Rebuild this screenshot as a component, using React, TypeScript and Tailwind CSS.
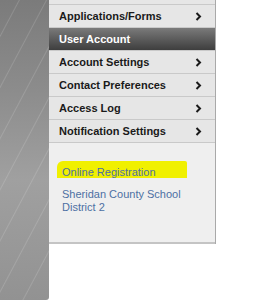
const rows = [
  { label: "Account Settings" },
  { label: "Contact Preferences" },
  { label: "Access Log" },
  { label: "Notification Settings" },
];

function Chevron() {
  return (
    <svg width="7" height="9" viewBox="0 0 7 9" className="mr-[2px]">
      <polyline points="1.5,1 5,4.5 1.5,8" fill="none" stroke="#1a1a1a" strokeWidth="2" />
    </svg>
  );
}

function MenuRow({ label }: { label: string }) {
  return (
    <div className="flex h-[23px] items-center justify-between border-b border-[#c9c9c9] bg-[#e6e6e6] pl-[10px] pr-[11px] text-[11px] font-bold text-[#1a1a1a]">
      <span>{label}</span>
      <Chevron />
    </div>
  );
}

export default function App() {
  return (
    <div className="flex h-[300px] w-[267px] bg-white font-['Liberation_Sans',Arial,sans-serif]">
      <div className="h-[300px] w-[49px] shrink-0 rounded-br-[3px] bg-[linear-gradient(180deg,#7b7b7b_0%,#8c8c8c_30%,#a0a0a0_60%,#929292_100%)]">
        <div className="h-full w-full bg-[repeating-linear-gradient(-62deg,transparent_0px,transparent_22px,rgba(255,255,255,0.14)_23px,transparent_24px)]" />
      </div>
      <div className="w-[167px] shrink-0 self-start border-r border-[#a9a9a9]">
        <div className="h-[5px] border-b border-[#c9c9c9] bg-[#e6e6e6]" />
        <MenuRow label="Applications/Forms" />
        <div className="flex h-[23px] items-center border-b border-[#c9c9c9] bg-[linear-gradient(180deg,#7a7a7a,#3e3e3e)] pl-[10px] text-[11px] font-bold text-white">
          User Account
        </div>
        {rows.map((r) => (
          <MenuRow key={r.label} label={r.label} />
        ))}
        <div className="h-[101px] border-b-2 border-[#c4c4c4] bg-[#efefef] pl-[13px] pt-[23px] text-[11px] leading-[13px] text-[#4d6fa3]">
          <div className="relative mb-[9px]">
            <span className="absolute left-[-5px] top-[-5px] h-[17px] w-[130px] rounded-tl-[6px] rounded-tr-[2px] bg-[#f0f000]" />
            <span className="relative">Online Registration</span>
          </div>
          <div>
            Sheridan County School
            <br />
            District 2
          </div>
        </div>
      </div>
    </div>
  );
}
